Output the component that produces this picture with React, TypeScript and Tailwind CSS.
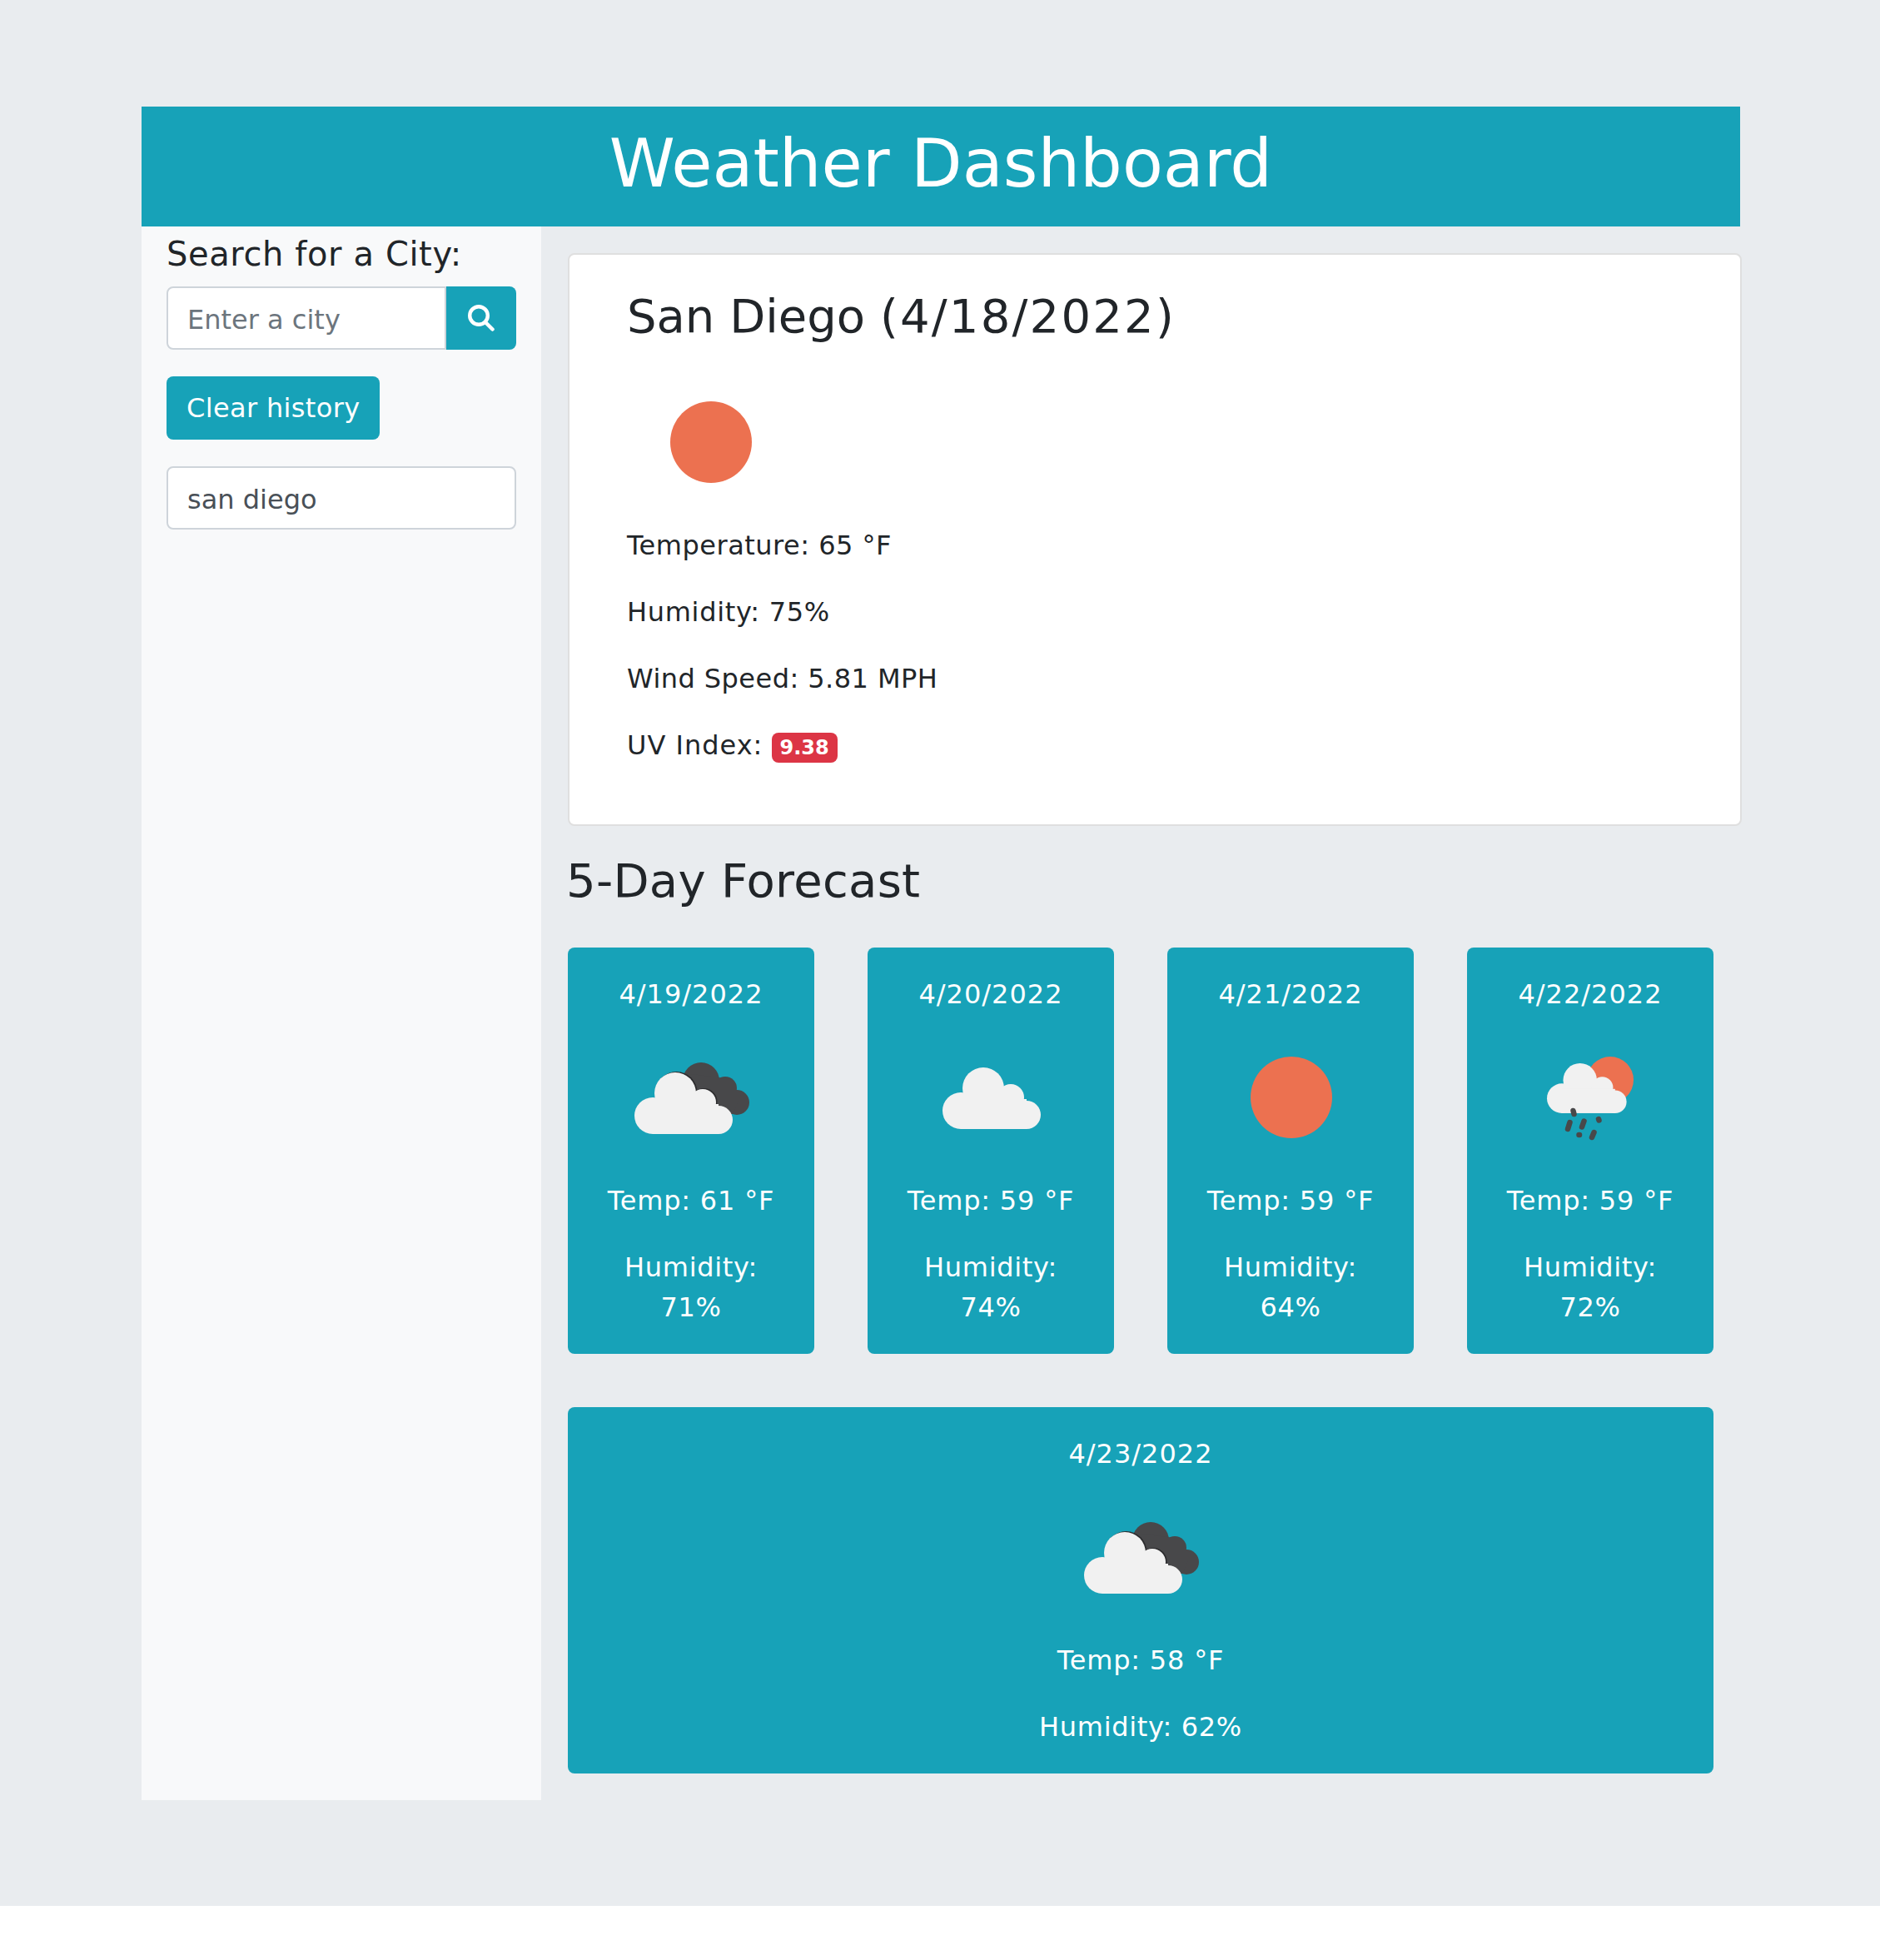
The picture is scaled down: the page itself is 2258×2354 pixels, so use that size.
const teal = "bg-[#17a2b8]";

// white cloud drawn with its own origin, moved into place by each icon
function CloudShape({ fill = "#f1f1f1" }: { fill?: string }) {
  return (
    <g fill={fill}>
      <circle cx="64" cy="114" r="22" />
      <circle cx="91" cy="87" r="25" />
      <circle cx="124" cy="98" r="16" />
      <circle cx="143" cy="119" r="17" />
      <rect x="64" y="100" width="79" height="36" />
    </g>
  );
}

function SunIcon() {
  return (
    <svg viewBox="0 0 200 200" className="block w-[200px] h-[200px]">
      <circle cx="101" cy="100" r="49" fill="#ec7150" />
    </svg>
  );
}

function CloudIcon() {
  return (
    <svg viewBox="0 -2 200 200" className="block w-[200px] h-[200px] mx-auto">
      <CloudShape />
    </svg>
  );
}

function DarkCloudIcon() {
  return (
    <svg viewBox="0 -2 200 200" className="block w-[200px] h-[200px] mx-auto">
      <g fill="#48484a">
        <circle cx="112" cy="78" r="22" />
        <circle cx="141" cy="87" r="14" />
        <circle cx="155" cy="104" r="15" />
        <polygon points="100,70 140,75 160,95 150,118 130,118 95,90" />
      </g>
      <g transform="translate(-10 6)">
        <g transform="translate(1.5 -1)">
          <circle cx="124" cy="98" r="16" fill="#2c2c2e" />
          <circle cx="91" cy="87" r="25" fill="#2c2c2e" />
        </g>
        <CloudShape />
      </g>
    </svg>
  );
}

function RainIcon() {
  return (
    <svg viewBox="0 -2 200 200" className="block w-[200px] h-[200px] mx-auto">
      <circle cx="124" cy="77" r="28" fill="#ec7150" />
      <g transform="translate(14 6.8) scale(0.81)">
        <CloudShape />
      </g>
      <g stroke="#48484a" strokeWidth="6.5" strokeLinecap="round">
        <line x1="79.5" y1="114" x2="80.5" y2="118" />
        <line x1="73" y1="136" x2="75.5" y2="128" />
        <line x1="90" y1="133.5" x2="92.5" y2="126.5" />
        <line x1="110" y1="124" x2="110.5" y2="125.5" />
        <line x1="86.5" y1="143" x2="87" y2="143" />
        <line x1="102" y1="146" x2="104.5" y2="140" />
      </g>
    </svg>
  );
}

function SearchIcon() {
  return (
    <svg viewBox="0 0 32 32" fill="none" stroke="white" className="block w-[32px] h-[32px]">
      <circle cx="13" cy="13" r="10.8" strokeWidth="4.4" />
      <line x1="21" y1="21" x2="29.5" y2="29.5" strokeWidth="4.5" strokeLinecap="round" />
    </svg>
  );
}

type Day = {
  date: string;
  temp: number;
  humidity: number;
  icon: React.ReactNode;
};

const days: Day[] = [
  { date: "4/19/2022", temp: 61, humidity: 71, icon: <DarkCloudIcon /> },
  { date: "4/20/2022", temp: 59, humidity: 74, icon: <CloudIcon /> },
  { date: "4/21/2022", temp: 59, humidity: 64, icon: <div className="flex justify-center"><SunIcon /></div> },
  { date: "4/22/2022", temp: 59, humidity: 72, icon: <RainIcon /> },
  { date: "4/23/2022", temp: 58, humidity: 62, icon: <DarkCloudIcon /> },
];

function ForecastCard({ day, wide }: { day: Day; wide?: boolean }) {
  return (
    <div className={`${teal} ${wide ? "col-span-4" : ""} rounded-[8px] pt-[32px] px-[32px] text-center text-white`}>
      <p className="tracking-[1px]">{day.date}</p>
      {day.icon}
      <p className="mb-[32px] tracking-[0.8px]">Temp: {day.temp} °F</p>
      <p className="mb-[32px] tracking-[0.7px]">Humidity: {day.humidity}%</p>
    </div>
  );
}

export default function App() {
  return (
    <div className="bg-[#e9ecef] pt-[128px] pb-[127px] text-[32px] leading-[48px] text-[#212529] [font-family:'DejaVu_Sans',sans-serif]">
      <div className="w-[1920px] ml-[170px]">
        <header className={`${teal} h-[144px] flex items-center justify-center pb-[6px]`}>
          <h1 className="text-[80px] leading-[96px] text-white">Weather Dashboard</h1>
        </header>

        <div className="flex">
          <aside className="w-[480px] shrink-0 bg-[#f8f9fa] px-[30px] pt-[9px]">
            <h5 className="text-[40px] leading-[48px] mb-[15px] tracking-[0.6px]">Search for a City:</h5>
            <div className="flex h-[76px] mb-[32px]">
              <input
                placeholder="Enter a city"
                className="flex-1 min-w-0 bg-white border-2 border-[#ced4da] rounded-l-[8px] pl-[23px] pr-[24px] pt-[4px] placeholder:text-[#6c757d] outline-none"
              />
              <button className={`${teal} w-[84px] rounded-r-[8px] flex items-center justify-center`}>
                <SearchIcon />
              </button>
            </div>
            <button className={`${teal} block h-[76px] px-[24px] rounded-[8px] text-white mb-[32px] tracking-[0.35px]`}>Clear history</button>
            <div className="h-[76px] bg-white border-2 border-[#ced4da] rounded-[8px] pl-[23px] pr-[24px] pt-[4px] flex items-center text-[#495057]">
              san diego
            </div>
          </aside>

          <main className="flex-1 pl-[32px] pt-[32px] pb-[32px]">
            <section className="bg-white border-2 border-[#dfdfdf] rounded-[8px] pl-[69px] pt-[40px] pb-[39px] mr-[-2px]">
              <h3 className="text-[56px] leading-[67px] mb-[18px]">
                San Diego <span className="tracking-[2.2px]">(4/18/2022)</span>
              </h3>
              <SunIcon />
              <p className="mb-[32px] tracking-[0.5px]">Temperature: 65 °F</p>
              <p className="mb-[32px] tracking-[0.7px]">Humidity: 75%</p>
              <p className="mb-[32px] tracking-[0.45px]">Wind Speed: 5.81 MPH</p>
              <p className="mb-[32px]">
                <span className="tracking-[1px]">UV Index:</span>{" "}
                <span className="inline-block bg-[#dc3545] text-white text-[24px] leading-[24px] font-bold px-[10px] py-[6px] rounded-[8px] align-baseline">
                  9.38
                </span>
              </p>
            </section>

            <h3 className="text-[56px] leading-[67px] mt-[32px] mb-[47px] tracking-[0.3px] ml-[-2px]">5-Day Forecast</h3>

            <div className="grid grid-cols-4 gap-x-[64px] gap-y-[64px] w-[1376px]">
              {days.map((day, i) => (
                <ForecastCard key={day.date} day={day} wide={i === 4} />
              ))}
            </div>
          </main>
        </div>
      </div>
    </div>
  );
}
